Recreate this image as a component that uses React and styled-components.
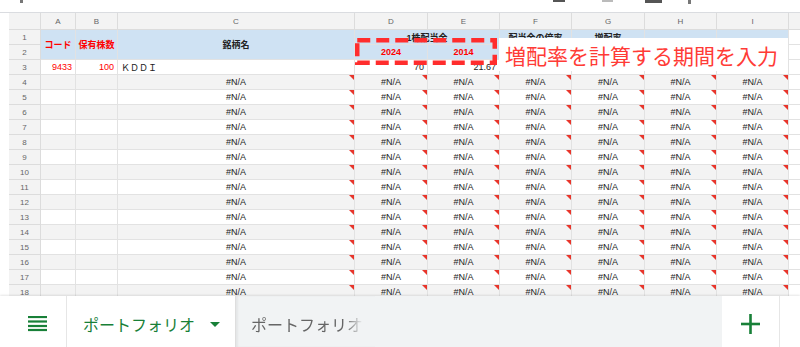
import React from 'react';
import styled, { createGlobalStyle, css } from 'styled-components';

const BLUE = '#cfe2f3';
const STRIPE = '#f3f3f3';
const RED = '#ff0000';
const GREEN = '#188038';
const COLS = ['A', 'B', 'C', 'D', 'E', 'F', 'G', 'H', 'I'];

const GlobalStyle = createGlobalStyle`
  html, body {
    margin: 0;
    padding: 0;
    background: #fff;
  }
  body {
    font-family: "Liberation Sans", "Noto Sans CJK JP", sans-serif;
  }
`;

const Screen = styled.div`
  position: relative;
  width: 800px;
  height: 347px;
  overflow: hidden;
  display: flex;
  flex-direction: column;
  background: #fff;
`;

const TopBar = styled.div`
  flex: none;
  height: 12px;
  display: flex;
  align-items: flex-start;
  border-bottom: 1px solid #dadce0;
`;

// bits of toolbar icons cut off by the top edge
const Stub = styled.span`
  margin-left: ${p => p.$gap}px;
  width: ${p => p.$w}px;
  height: ${p => p.$h}px;
  background: ${p => p.$c};
`;

const Sheet = styled.div`
  flex: 1;
  min-height: 0;
  overflow: hidden;
  padding-left: 9px;
  display: grid;
  grid-template-columns: 32px 35px 42px 237px 73px 72px 72px 73px 72px 72px 100px;
  grid-template-rows: 17px;
  grid-auto-rows: 15px;
  align-content: start;
`;

const Cell = styled.div`
  position: relative;
  box-sizing: border-box;
  min-width: 0;
  border-right: 1px solid #e2e2e2;
  border-bottom: 1px solid #e2e2e2;
  background: ${p => p.$bg || '#fff'};
  color: ${p => p.$color || '#222'};
  font-weight: ${p => (p.$bold ? 700 : 400)};
  font-size: 9px;
  display: flex;
  align-items: ${p => (p.$top ? 'flex-start' : 'center')};
  justify-content: ${p => (p.$align === 'right' ? 'flex-end' : p.$align === 'left' ? 'flex-start' : 'center')};
  padding: ${p => (p.$top ? '1px 3px 0' : '0 3px')};
  white-space: nowrap;
  overflow: hidden;
  grid-column: ${p => (p.$span ? `span ${p.$span}` : 'auto')};
  grid-row: ${p => (p.$rows ? `span ${p.$rows}` : 'auto')};
  ${p => p.$err && css`
    &::after {
      content: '';
      position: absolute;
      top: 0;
      right: 0;
      border-top: 5px solid #e8352b;
      border-left: 5px solid transparent;
    }
  `}
`;

const ColHead = styled(Cell)`
  background: ${STRIPE};
  color: #666;
  font-size: 8px;
  border-color: #dcdcdc;
`;

const RowHead = styled(Cell)`
  background: ${STRIPE};
  color: #666;
  font-size: 8px;
  border-color: #dcdcdc;
`;

const DashedBox = styled.svg`
  position: absolute;
  left: 355px;
  top: 38px;
`;

const Note = styled.div`
  position: absolute;
  left: 499px;
  top: 38px;
  width: 289px;
  height: 33px;
  box-sizing: border-box;
  padding-left: 6px;
  background: #fff;
  display: flex;
  align-items: center;
  color: #ff3b36;
  font-family: "Noto Sans CJK JP", sans-serif;
  font-size: 21px;
  white-space: nowrap;
`;

const BottomBar = styled.div`
  position: relative;
  z-index: 1;
  flex: none;
  height: 51px;
  display: flex;
  background: #f1f3f4;
  box-shadow: 0 -1px 2px rgba(0, 0, 0, 0.1);
  font-family: "Noto Sans CJK JP", sans-serif;
`;

const MenuButton = styled.div`
  width: 67px;
  box-sizing: border-box;
  padding: 4px 0 0 28px;
  background: #fff;
  border-right: 1px solid #e6e6e6;
  display: flex;
  align-items: center;
`;

const Tab = styled.div`
  width: ${p => p.$w}px;
  box-sizing: border-box;
  padding: 4px 0 0 ${p => p.$pad}px;
  display: flex;
  align-items: center;
  gap: 15px;
  background: ${p => (p.$active ? '#fff' : 'transparent')};
  color: ${p => (p.$active ? GREEN : '#666')};
  font-size: 16px;
  white-space: nowrap;
  ${p => !p.$active && css`
    border-left: 1px solid #dedede;
    box-shadow: inset 2px 0 2px rgba(0, 0, 0, 0.05);
  `}
`;

const FadeText = styled.span`
  width: 112px;
  overflow: hidden;
  -webkit-mask-image: linear-gradient(to right, #000 84%, transparent 100%);
  mask-image: linear-gradient(to right, #000 84%, transparent 100%);
`;

const Caret = styled.span`
  width: 0;
  height: 0;
  border-left: 5px solid transparent;
  border-right: 5px solid transparent;
  border-top: 5px solid ${GREEN};
  margin-top: 2px;
`;

const Filler = styled.div`
  flex: 1;
`;

const AddButton = styled.div`
  width: 57px;
  padding-top: 4px;
  background: #fff;
  display: flex;
  align-items: center;
  justify-content: center;
`;

const EdgePanel = styled.div`
  width: 20px;
  background: #fff;
  border-left: 1px solid #e6e6e6;
`;

const HamburgerIcon = () => (
  <svg width="19" height="16" viewBox="0 0 19 16">
    {[1, 5.5, 10, 14].map(y => (
      <rect key={y} x="0" y={y - 1.1} width="19" height="2.2" fill={GREEN} />
    ))}
  </svg>
);

const PlusIcon = () => (
  <svg width="19" height="20" viewBox="0 0 19 20">
    <rect x="8.2" y="0" width="2.6" height="20" fill={GREEN} />
    <rect x="0" y="8.7" width="19" height="2.6" fill={GREEN} />
  </svg>
);

export default function App() {
  const rows = [];
  for (let r = 4; r <= 18; r++) rows.push(r);

  return (
    <>
      <GlobalStyle />
      <Screen>
        <TopBar>
          <Stub $gap={20} $w={3} $h={3} $c="#777" />
          <Stub $gap={530} $w={12} $h={2} $c="#555" />
          <Stub $gap={37} $w={11} $h={2} $c="#bbb" />
          <Stub $gap={32} $w={17} $h={3} $c="#555" />
          <Stub $gap={26} $w={3} $h={4} $c="#777" />
        </TopBar>

        <Sheet>
          <ColHead />
          {COLS.map(c => <ColHead key={c}>{c}</ColHead>)}
          <ColHead />

          <RowHead>1</RowHead>
          <Cell $rows={2} $bg={BLUE} $color={RED} $bold>コード</Cell>
          <Cell $rows={2} $bg={BLUE} $color={RED} $bold>保有株数</Cell>
          <Cell $rows={2} $bg={BLUE} $bold>銘柄名</Cell>
          <Cell $span={2} $bg={BLUE} $bold>1株配当金</Cell>
          <Cell $bg={BLUE} $bold $top>配当金の倍率</Cell>
          <Cell $bg={BLUE} $bold $top>増配率</Cell>
          <Cell $bg={BLUE} />
          <Cell $bg={BLUE} />
          <Cell />

          <RowHead>2</RowHead>
          <Cell $bg={BLUE} $color={RED} $bold>2024</Cell>
          <Cell $bg={BLUE} $color={RED} $bold>2014</Cell>
          <Cell $bg={BLUE} />
          <Cell $bg={BLUE} />
          <Cell $bg={BLUE} />
          <Cell $bg={BLUE} />
          <Cell />

          <RowHead>3</RowHead>
          <Cell $color={RED} $align="right">9433</Cell>
          <Cell $color={RED} $align="right">100</Cell>
          <Cell $align="left">ＫＤＤＩ</Cell>
          <Cell $align="right">70</Cell>
          <Cell $align="right">21.67</Cell>
          <Cell />
          <Cell />
          <Cell />
          <Cell />
          <Cell />

          {rows.map(r => {
            const bg = r % 2 === 0 ? STRIPE : '#fff';
            return (
              <React.Fragment key={r}>
                <RowHead>{r}</RowHead>
                <Cell $bg={bg} />
                <Cell $bg={bg} />
                {COLS.slice(2).map(c => (
                  <Cell key={c} $bg={bg} $err>#N/A</Cell>
                ))}
                <Cell />
              </React.Fragment>
            );
          })}
        </Sheet>

        <DashedBox width="142" height="27" viewBox="0 0 142 27">
          <rect
            x="2.25"
            y="2.25"
            width="137.5"
            height="22.5"
            fill="none"
            stroke="#ff2d2d"
            strokeWidth="4.5"
            strokeDasharray="13 6"
          />
        </DashedBox>

        <Note>増配率を計算する期間を入力</Note>

        <BottomBar>
          <MenuButton>
            <HamburgerIcon />
          </MenuButton>
          <Tab $active $w={168} $pad={16}>
            <span>ポートフォリオ</span>
            <Caret />
          </Tab>
          <Tab $w={140} $pad={15}>
            <FadeText>ポートフォリオ</FadeText>
          </Tab>
          <Filler />
          <AddButton>
            <PlusIcon />
          </AddButton>
          <EdgePanel />
        </BottomBar>
      </Screen>
    </>
  );
}
